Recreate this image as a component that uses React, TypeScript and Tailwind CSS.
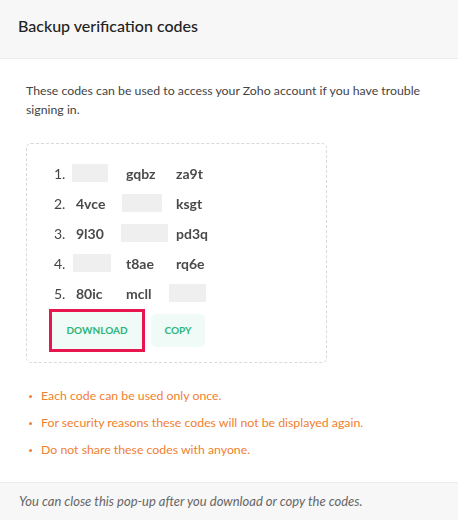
import React from "react";

type Cell = { t?: string; box?: string };

const rows: { n: string; cells: Cell[] }[] = [
  { n: "1.", cells: [{ box: "ml-0 w-[36px]" }, { t: "gqbz" }, { t: "za9t" }] },
  { n: "2.", cells: [{ t: "4vce" }, { box: "ml-0 w-[40px]" }, { t: "ksgt" }] },
  { n: "3.", cells: [{ t: "9l30" }, { box: "-ml-[1px] w-[47px]" }, { t: "pd3q" }] },
  { n: "4.", cells: [{ box: "ml-[1px] w-[38px]" }, { t: "t8ae" }, { t: "rq6e" }] },
  { n: "5.", cells: [{ t: "80ic" }, { t: "mcll" }, { box: "-ml-[3px] w-[37px]" }] },
];

const colW = ["w-[50px]", "w-[50px]", "w-[60px]"];

export default function App() {
  return (
    <div
      className="flex h-[520px] w-[458px] flex-col bg-white"
      style={{ fontFamily: "Lato, 'Open Sans', sans-serif" }}
    >
      <div className="flex h-[59px] shrink-0 items-center border-b border-[#ececec] bg-[#f7f7f7] pl-[18px] pb-[6px]">
        <h1 className="text-[16px] font-medium text-[#222]">Backup verification codes</h1>
      </div>

      <div className="flex-1 pl-[26px] pt-[22px]">
        <p className="w-[410px] text-[12.3px] leading-[19px] text-[#444]">
          These codes can be used to access your Zoho account if you have trouble signing in.
        </p>

        <div className="mt-[24px] h-[220px] w-[301px] rounded-[5px] border border-dashed border-[#d9d9d9] pl-[27px] pt-[14px]">
          {rows.map((r) => (
            <div key={r.n} className="flex h-[30px] items-center">
              <span className="w-[18px] text-[14px] text-[#444] blur-[0.3px]">{r.n}</span>
              {r.cells.map((c, i) => (
                <div key={i} className={`flex items-center ${colW[i]}`}>
                  {c.t ? (
                    <span className="pl-[4px] text-[14px] font-bold text-[#4a4a4a] blur-[0.5px]">{c.t}</span>
                  ) : (
                    <span className={`block h-[18px] bg-[#efefef] blur-[0.5px] ${c.box}`} />
                  )}
                </div>
              ))}
            </div>
          ))}

          <div className="mt-[1px] flex items-center gap-[6px]">
            <div className="-ml-[5px] border-[3px] border-[#e8164f]">
              <button className="flex h-[37px] w-[90px] items-center justify-center rounded-[4px] bg-[#f0faf6] text-[10px] font-bold text-[#2ab57c]">
                DOWNLOAD
              </button>
            </div>
            <button className="flex h-[33px] w-[54px] items-center justify-center rounded-[5px] bg-[#f0faf6] text-[10px] font-bold text-[#2ab57c]">
              COPY
            </button>
          </div>
        </div>

        <ul className="mt-[24px] flex flex-col gap-[9px] pl-[3px]">
          {[
            "Each code can be used only once.",
            "For security reasons these codes will not be displayed again.",
            "Do not share these codes with anyone.",
          ].map((t) => (
            <li key={t} className="flex items-center text-[12.3px] leading-[18px] text-[#f0802f]">
              <span className="mr-[9px] inline-block h-[3px] w-[3px] rounded-full bg-[#f0802f]" />
              {t}
            </li>
          ))}
        </ul>
      </div>

      <div className="flex h-[38px] shrink-0 items-center border-t border-[#ececec] bg-[#f7f7f7] pl-[19px]">
        <p className="text-[13px] italic text-[#666]">
          You can close this pop-up after you download or copy the codes.
        </p>
      </div>
    </div>
  );
}
